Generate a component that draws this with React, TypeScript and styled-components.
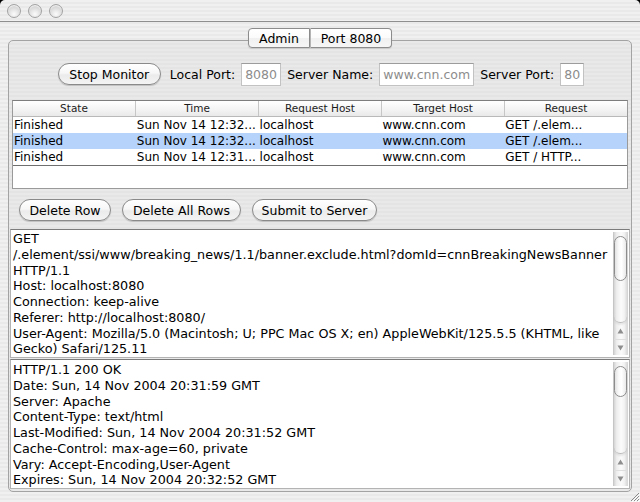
import React from "react";
import styled, { createGlobalStyle } from "styled-components";

const Global = createGlobalStyle`
  html, body { margin: 0; padding: 0; background: #000; }
  body { width: 640px; height: 502px; overflow: hidden; font-family: "DejaVu Sans", "Liberation Sans", sans-serif; }
  * { box-sizing: border-box; }
`;

const stripes = (a: string, b: string) =>
  `repeating-linear-gradient(180deg, ${a} 0px, ${a} 2px, ${b} 2px, ${b} 4px)`;

const Window = styled.div`
  position: relative;
  width: 640px;
  height: 502px;
  display: flex;
  flex-direction: column;
  background: ${stripes("#f0f0f0", "#e9e9e9")};
  border-radius: 5px 5px 0 0;
  overflow: hidden;
`;

const TitleBar = styled.div`
  height: 22px;
  flex: none;
  display: flex;
  align-items: center;
  gap: 7px;
  padding-left: 7px;
  border-bottom: 1px solid #8e8e8e;
`;

const Light = styled.span`
  width: 14px;
  height: 14px;
  border-radius: 50%;
  border: 1px solid #a2a2a2;
  background: radial-gradient(circle at 50% 75%, #fbfbfb 0%, #e2e2e2 45%, #c4c4c4 100%);
  box-shadow: inset 0 1px 1px rgba(255, 255, 255, 0.8);
`;

const Content = styled.div`
  flex: 1;
  display: flex;
  flex-direction: column;
  padding: 6px 8px 10px 8px;
`;

const TabRow = styled.div`
  position: relative;
  z-index: 1;
  height: 20px;
  margin-bottom: -8px;
  display: flex;
  justify-content: center;
`;

const Tab = styled.div<{ $w: number; $first?: boolean; $last?: boolean }>`
  width: ${(p) => p.$w}px;
  height: 20px;
  display: flex;
  align-items: center;
  justify-content: center;
  font-size: 12.5px;
  color: #000;
  border: 1px solid #8c8c8c;
  border-left-width: ${(p) => (p.$first ? 1 : 0)}px;
  border-radius: ${(p) => (p.$first ? "4px 0 0 4px" : p.$last ? "0 4px 4px 0" : "0")};
  background: linear-gradient(180deg, #ffffff 0%, #fbfbfb 50%, #f0f0f0 51%, #f6f6f6 100%);
  box-shadow: 0 1px 1px rgba(0, 0, 0, 0.12);
  & + & { border-left: 1px solid #b4b4b4; }
`;

const GroupBox = styled.div`
  flex: 1;
  display: flex;
  flex-direction: column;
  border: 1px solid #a3a3a3;
  border-radius: 5px;
  background: ${stripes("#e9e9e9", "#e4e4e4")};
`;

const ControlRow = styled.div`
  margin-top: 21px;
  height: 24px;
  display: flex;
  align-items: center;
  justify-content: center;
  gap: 6px;
  font-size: 12.5px;
  padding-left: 2px;
`;

const AquaButton = styled.div<{ $w: number }>`
  width: ${(p) => p.$w}px;
  height: 22px;
  display: flex;
  align-items: center;
  justify-content: center;
  border-radius: 11px;
  border: 1px solid #8a8a8a;
  background: linear-gradient(180deg, #ffffff 0%, #f7f7f7 45%, #ebebeb 55%, #f4f4f4 100%);
  box-shadow: 0 1px 1px rgba(0, 0, 0, 0.18);
  font-size: 12.5px;
  color: #000;
`;

const StopButton = styled(AquaButton)`
  margin-right: 3px;
`;

const Label = styled.span`
  color: #000;
  white-space: nowrap;
`;

const Field = styled.div<{ $w: number }>`
  width: ${(p) => p.$w}px;
  height: 23px;
  background: #fff;
  border: 1px solid #c2c2c2;
  border-top-color: #9c9c9c;
  color: #8c8c8c;
  display: flex;
  align-items: center;
  padding-left: 3px;
  white-space: nowrap;
  overflow: hidden;
`;

const Table = styled.div`
  margin: 14px 3px 0 3px;
  height: 89px;
  background: #fff;
  border: 1px solid #9a9a9a;
  border-top-color: #7d7d7d;
  display: flex;
  flex-direction: column;
`;

const HeaderRow = styled.div`
  height: 16px;
  display: flex;
  background: linear-gradient(180deg, #ffffff 0%, #f3f3f3 60%, #e9e9e9 100%);
  border-bottom: 1px solid #b9b9b9;
`;

const HeaderCell = styled.div`
  flex: 1;
  font-size: 10.5px;
  line-height: 15px;
  text-align: center;
  color: #1c1c1c;
  border-right: 1px solid #c6c6c6;
  &:last-child { border-right: none; }
`;

const Rows = styled.div`
  border-bottom: 1px solid #6f6f6f;
`;

const Row = styled.div<{ $sel?: boolean }>`
  height: 16px;
  display: flex;
  background: ${(p) => (p.$sel ? "#b5d3fb" : "#fff")};
`;

const Cell = styled.div`
  flex: 1;
  font-size: 12px;
  line-height: 16px;
  padding-left: 1px;
  white-space: nowrap;
  overflow: hidden;
  color: #000;
`;

const ButtonRow = styled.div`
  margin-top: 10px;
  height: 22px;
  display: flex;
  padding-left: 10px;
  gap: 11px;
`;

const ScrollPane = styled.div<{ $h: number; $mt: number }>`
  margin: ${(p) => p.$mt}px 1px 0 1px;
  height: ${(p) => p.$h}px;
  background: #fff;
  border: 1px solid #b3b3b3;
  border-top-color: #7c7c7c;
  display: flex;
`;

const TextBody = styled.div<{ $pt: number }>`
  flex: 1;
  padding: ${(p) => p.$pt}px 0 0 2px;
  font-size: 12.75px;
  line-height: 15.75px;
  white-space: pre;
  overflow: hidden;
  color: #000;
`;

const Scrollbar = styled.div`
  width: 15px;
  margin: 2px 1px 2px 0;
  display: flex;
  flex-direction: column;
  background: linear-gradient(90deg, #d4d4d4 0%, #ededed 20%, #fbfbfb 55%, #f2f2f2 80%, #dadada 100%);
  border-left: 1px solid #c9c9c9;
  border-right: 1px solid #d9d9d9;
`;

const TrackArea = styled.div`
  flex: 1;
  padding-top: 4px;
  border-radius: 0 0 7px 7px;
  border-bottom: 1px solid #b8b8b8;
  box-shadow: 0 2px 2px rgba(0, 0, 0, 0.08);
  display: flex;
  justify-content: center;
`;

const Thumb = styled.div<{ $h: number }>`
  width: 13px;
  height: ${(p) => p.$h}px;
  border-radius: 7px;
  border: 1px solid #8c8c8c;
  background: linear-gradient(90deg, #e2e2e2 0%, #fafafa 35%, #ffffff 60%, #e9e9e9 100%);
`;

const ArrowBox = styled.div`
  height: 16px;
  display: flex;
  align-items: center;
  justify-content: center;
  & + & { border-top: 1px solid #dedede; }
`;

const Grip = styled.svg`
  position: absolute;
  right: 0;
  bottom: 0;
`;

function ScrollBar({ thumb }: { thumb: number }) {
  return (
    <Scrollbar>
      <TrackArea>
        <Thumb $h={thumb} />
      </TrackArea>
      <ArrowBox>
        <svg width="7" height="6" viewBox="0 0 7 6">
          <path d="M3.5 0.5 L6.5 5.5 L0.5 5.5 Z" fill="#8e8e8e" />
        </svg>
      </ArrowBox>
      <ArrowBox>
        <svg width="7" height="6" viewBox="0 0 7 6">
          <path d="M0.5 0.5 L6.5 0.5 L3.5 5.5 Z" fill="#8e8e8e" />
        </svg>
      </ArrowBox>
    </Scrollbar>
  );
}

const rows = [
  ["Finished", "Sun Nov 14 12:32...", "localhost", "www.cnn.com", "GET /.elem..."],
  ["Finished", "Sun Nov 14 12:32...", "localhost", "www.cnn.com", "GET /.elem..."],
  ["Finished", "Sun Nov 14 12:31...", "localhost", "www.cnn.com", "GET / HTTP..."],
];

const requestText = [
  "GET",
  "/.element/ssi/www/breaking_news/1.1/banner.exclude.html?domId=cnnBreakingNewsBanner",
  "HTTP/1.1",
  "Host: localhost:8080",
  "Connection: keep-alive",
  "Referer: http://localhost:8080/",
  "User-Agent: Mozilla/5.0 (Macintosh; U; PPC Mac OS X; en) AppleWebKit/125.5.5 (KHTML, like",
  "Gecko) Safari/125.11",
].join("\n");

const responseText = [
  "HTTP/1.1 200 OK",
  "Date: Sun, 14 Nov 2004 20:31:59 GMT",
  "Server: Apache",
  "Content-Type: text/html",
  "Last-Modified: Sun, 14 Nov 2004 20:31:52 GMT",
  "Cache-Control: max-age=60, private",
  "Vary: Accept-Encoding,User-Agent",
  "Expires: Sun, 14 Nov 2004 20:32:52 GMT",
].join("\n");

export default function App() {
  return (
    <>
      <Global />
      <Window>
        <TitleBar>
          <Light />
          <Light />
          <Light />
        </TitleBar>
        <Content>
          <TabRow>
            <Tab $w={62} $first>Admin</Tab>
            <Tab $w={82} $last>Port 8080</Tab>
          </TabRow>
          <GroupBox>
            <ControlRow>
              <StopButton $w={103}>Stop Monitor</StopButton>
              <Label>Local Port:</Label>
              <Field $w={40}>8080</Field>
              <Label>Server Name:</Label>
              <Field $w={95}>www.cnn.com</Field>
              <Label>Server Port:</Label>
              <Field $w={24}>80</Field>
            </ControlRow>
            <Table>
              <HeaderRow>
                {["State", "Time", "Request Host", "Target Host", "Request"].map((h) => (
                  <HeaderCell key={h}>{h}</HeaderCell>
                ))}
              </HeaderRow>
              <Rows>
                {rows.map((r, i) => (
                  <Row key={i} $sel={i === 1}>
                    {r.map((c, j) => (
                      <Cell key={j}>{c}</Cell>
                    ))}
                  </Row>
                ))}
              </Rows>
            </Table>
            <ButtonRow>
              <AquaButton $w={92}>Delete Row</AquaButton>
              <AquaButton $w={119}>Delete All Rows</AquaButton>
              <AquaButton $w={125}>Submit to Server</AquaButton>
            </ButtonRow>
            <ScrollPane $h={129} $mt={8}>
              <TextBody $pt={1}>{requestText}</TextBody>
              <ScrollBar thumb={45} />
            </ScrollPane>
            <ScrollPane $h={130} $mt={1}>
              <TextBody $pt={2}>{responseText}</TextBody>
              <ScrollBar thumb={31} />
            </ScrollPane>
          </GroupBox>
        </Content>
        <Grip width="12" height="12" viewBox="0 0 12 12">
          <path d="M11 3 L3 11 M11 6 L6 11 M11 9 L9 11" stroke="#8a8a8a" strokeWidth="1" />
          <path d="M12 4 L4 12 M12 7 L7 12 M12 10 L10 12" stroke="#ffffff" strokeWidth="1" />
        </Grip>
      </Window>
    </>
  );
}
